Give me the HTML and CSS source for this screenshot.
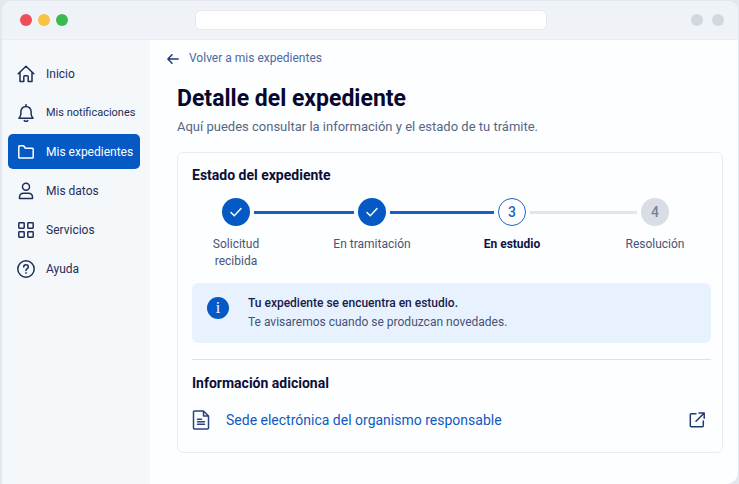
FILE: index.html
```
<!DOCTYPE html>
<html lang="es">
<head>
  <meta charset="UTF-8">
  <meta name="viewport" content="width=device-width, initial-scale=1">
  <title>Detalle del expediente</title>
  <link rel="stylesheet" href="styles.css">
</head>
<body>
<div class="window">
  <header class="topbar">
    <div class="dots">
      <span class="dot red"></span>
      <span class="dot yellow"></span>
      <span class="dot green"></span>
    </div>
    <input class="address" type="text" aria-label="Dirección">
    <div class="dots tools">
      <span class="dot"></span>
      <span class="dot"></span>
    </div>
  </header>

  <div class="layout">
    <nav class="sidebar">
      <a href="#">
        <svg viewBox="0 0 18 18"><path d="M1.200 8.800 9 1.200l7.800 7.600M3 7.200v9.300h3.800v-4.700a1 1 0 0 1 1-1h2.400a1 1 0 0 1 1 1v4.700H15V7.200"/></svg>
        Inicio
      </a>
      <a href="#" class="long">
        <svg viewBox="0 0 18 18"><path d="M9 .6v1.600M2 14.300h14c-1.300-1.600-1.900-2.600-1.900-4.500V7.500a5.100 5.100 0 0 0-10.200 0v2.300c0 1.900-.6 2.900-1.900 4.500zM7.300 16.600c.9.900 2.500.9 3.400 0"/></svg>
        Mis notificaciones
      </a>
      <a href="#" class="active">
        <svg viewBox="0 0 18 18"><path d="M1.800 14.200V3.500a.8.8 0 0 1 .8-.8h4l1.800 2.500h7a.8.8 0 0 1 .8.8v8.200a.8.8 0 0 1-.8.8h-12.800a.8.8 0 0 1-.8-.8z"/></svg>
        Mis expedientes
      </a>
      <a href="#">
        <svg viewBox="0 0 18 18"><circle cx="9" cy="4.800" r="3.500"/><path d="M2.500 16.500v-1.300c0-2.500 1.800-4 4.200-4h4.600c2.400 0 4.200 1.500 4.200 4v1.300z"/></svg>
        Mis datos
      </a>
      <a href="#">
        <svg viewBox="0 0 18 18"><rect x="1.800" y="1.800" width="5.400" height="5.400" rx=".6"/><rect x="10.800" y="1.800" width="5.400" height="5.400" rx=".6"/><rect x="1.800" y="10.800" width="5.400" height="5.400" rx=".6"/><rect x="10.800" y="10.800" width="5.400" height="5.400" rx=".6"/></svg>
        Servicios
      </a>
      <a href="#">
        <svg viewBox="0 0 18 18"><circle cx="9" cy="9" r="8.200"/><path d="M6.700 7.100c0-1.400 1-2.300 2.300-2.300s2.300.9 2.300 2.100c0 1.600-2.300 1.700-2.300 3.500M9 12.700v.6"/></svg>
        Ayuda
      </a>
    </nav>

    <main>
      <a href="#" class="back">
        <svg viewBox="0 0 12 12"><path d="M11.200 7H1M5 2.800.9 7 5 11.200"/></svg>
        Volver a mis expedientes
      </a>

      <div class="content">
        <h1>Detalle del expediente</h1>
        <p class="subtitle">Aquí puedes consultar la información y el estado de tu trámite.</p>

        <section class="card">
          <h2>Estado del expediente</h2>
          <ol class="steps">
            <li class="done">
              <span class="circle"><svg viewBox="0 0 12 12"><path d="m1 6.500 3.300 3.300L11 2.500"/></svg></span>
              <span class="label">Solicitud<br>recibida</span>
            </li>
            <li class="done">
              <span class="circle"><svg viewBox="0 0 12 12"><path d="m1 6.500 3.300 3.300L11 2.500"/></svg></span>
              <span class="label">En tramitación</span>
            </li>
            <li class="current">
              <span class="circle">3</span>
              <span class="label">En estudio</span>
            </li>
            <li>
              <span class="circle">4</span>
              <span class="label">Resolución</span>
            </li>
          </ol>

          <div class="notice">
            <span class="info">i</span>
            <div>
              <p class="notice-title">Tu expediente se encuentra en estudio.</p>
              <p>Te avisaremos cuando se produzcan novedades.</p>
            </div>
          </div>

          <hr>

          <h2>Información adicional</h2>
          <a href="#" class="resource">
            <svg class="doc" viewBox="0 0 18 20"><path d="M2.500 1h9l5 5v12a1 1 0 0 1-1 1h-13a1 1 0 0 1-1-1V2a1 1 0 0 1 1-1zM11.500 1v5h5M5.500 9.200h4M5.500 11.700h7M5.500 14.200h7"/></svg>
            <span>Sede electrónica del organismo responsable</span>
            <svg class="external" viewBox="0 0 16 16"><path d="M7 1.800H2.300a1 1 0 0 0-1 1v11a1 1 0 0 0 1 1h11a1 1 0 0 0 1-1V9M7 9.200l8-8M10 1h5.200v5.200"/></svg>
          </a>
        </section>
      </div>
    </main>
  </div>
</div>
</body>
</html>
```

FILE: styles.css
```
* {
  margin: 0;
  padding: 0;
  box-sizing: border-box;
}

body {
  min-height: 100vh;
  padding: 1px 1px 0 2px;
  display: flex;
  background: #e3e8ee;
  font: 14px/20px Roboto, "Liberation Sans", sans-serif;
  color: #1f2d5c;
}

a {
  color: inherit;
  text-decoration: none;
}

svg {
  flex: none;
  fill: none;
  stroke: currentColor;
  stroke-width: 1.5;
  stroke-linecap: round;
  stroke-linejoin: round;
}

.window {
  flex: 1;
  display: flex;
  flex-direction: column;
  background: #fdfeff;
  border-radius: 10px 10px 12px 0;
  overflow: hidden;
}

/* top bar */
.topbar {
  display: flex;
  align-items: center;
  height: 39px;
  padding: 0 14px 0 18px;
  background: #eff3f8;
  border-bottom: 1px solid #e9edf2;
}

.dots {
  display: flex;
  gap: 6px;
  width: 175px;
}

.dot {
  width: 12px;
  height: 12px;
  border-radius: 50%;
  background: #d2d7df;
}

.red { background: #ee4e57; }
.yellow { background: #f7c142; }
.green { background: #3cb950; }

.tools {
  gap: 9px;
  width: 177px;
  justify-content: flex-end;
}

.address {
  flex: 1;
  min-width: 0;
  height: 20px;
  padding: 0 8px;
  border: 1px solid #e3e8ed;
  border-radius: 6px;
  background: #fff;
  font: inherit;
}

/* sidebar */
.layout {
  flex: 1;
  display: flex;
}

.sidebar {
  flex: none;
  width: 148px;
  padding: 16px 10px 16px 6px;
  display: flex;
  flex-direction: column;
  gap: 4px;
  background: #f4f8fb;
}

.sidebar a {
  display: flex;
  align-items: center;
  gap: 11px;
  height: 35px;
  padding-left: 9px;
  border-radius: 5px;
  font-size: 12px;
  white-space: nowrap;
}

.sidebar svg {
  width: 18px;
  height: 18px;
}

.sidebar .long {
  font-size: 11px;
}

.sidebar .active {
  background: #0559c4;
  color: #fff;
}

/* main */
main {
  flex: 1;
  min-width: 0;
  padding: 8px 15px 30px 17px;
}

.back {
  display: inline-flex;
  align-items: center;
  gap: 10px;
  font-size: 12px;
  color: #4c68a4;
}

.back svg {
  width: 12px;
  height: 12px;
  color: #1f3a70;
}

.content {
  padding-left: 10px;
}

h1 {
  margin-top: 14px;
  font-size: 23px;
  line-height: 32px;
  color: #06082e;
}

.subtitle {
  margin-top: 2px;
  font-size: 13px;
  color: #566684;
}

.card {
  margin-top: 15px;
  padding: 12px 11px 22px 14px;
  border: 1px solid #e9edf2;
  border-radius: 6px;
}

h2 {
  font-size: 14px;
  line-height: 20px;
  color: #0b0f38;
}

/* progress steps */
.steps {
  display: grid;
  grid-template-columns: 136fr 140fr 143fr 88px;
  margin-top: 13px;
  padding-right: 12px;
  list-style: none;
}

.steps li {
  position: relative;
}

.steps li::after {
  content: "";
  position: absolute;
  top: 13px;
  left: 62px;
  right: -26px;
  height: 3px;
  background: #e2e5ea;
}

.steps .done::after {
  background: #1560c2;
}

.steps li:last-child::after {
  display: none;
}

.circle {
  display: flex;
  align-items: center;
  justify-content: center;
  width: 28px;
  height: 28px;
  margin-left: 30px;
  border-radius: 50%;
  background: #d9dee4;
  color: #75819b;
  font-size: 14px;
  font-weight: 500;
}

.circle svg {
  width: 12px;
  height: 12px;
}

.done .circle {
  background: #0559c4;
  color: #fff;
}

.current .circle {
  border: 1px solid #1d64c6;
  background: #fff;
  color: #1d64c6;
}

.label {
  display: block;
  width: 88px;
  margin-top: 10px;
  font-size: 12px;
  line-height: 17px;
  text-align: center;
  white-space: nowrap;
  color: #4a5375;
}

.current .label {
  font-weight: 700;
  color: #10144a;
}

/* notice */
.notice {
  display: flex;
  gap: 19px;
  margin-top: 13px;
  padding: 11px 15px;
  border-radius: 6px;
  background: #e8f2fe;
  font-size: 12px;
  line-height: 19px;
  color: #465375;
}

.notice-title {
  font-weight: 500;
  color: #16204a;
}

.info {
  flex: none;
  width: 22px;
  height: 22px;
  margin-top: 3px;
  border-radius: 50%;
  background: #0559c4;
  color: #fff;
  font: 16px/22px "Liberation Serif", serif;
  text-align: center;
}

hr {
  margin: 16px 0 13px;
  border: 0;
  border-top: 1px solid #dfe3e8;
}

.resource {
  display: flex;
  align-items: center;
  gap: 16px;
  margin-top: 17px;
  padding-right: 6px;
  color: #1259bd;
}

.resource span {
  flex: 1;
}

.doc {
  width: 18px;
  height: 20px;
  color: #27447c;
}

.external {
  width: 16px;
  height: 16px;
  color: #1f3a70;
}
```
